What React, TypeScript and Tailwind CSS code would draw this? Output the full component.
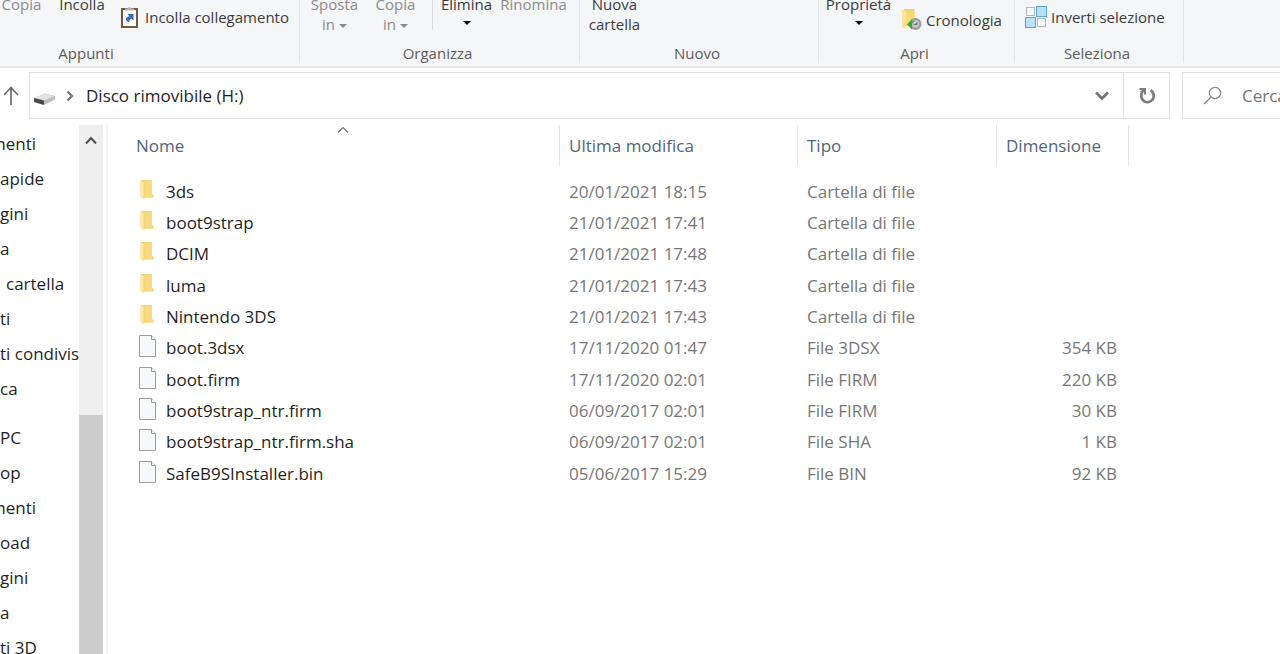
import type { ReactNode } from "react";

type Entry = { name: string; date: string; type: string; size: string };

const folder = "Cartella di file";

const entries: Entry[] = [
  { name: "3ds", date: "20/01/2021 18:15", type: folder, size: "" },
  { name: "boot9strap", date: "21/01/2021 17:41", type: folder, size: "" },
  { name: "DCIM", date: "21/01/2021 17:48", type: folder, size: "" },
  { name: "luma", date: "21/01/2021 17:43", type: folder, size: "" },
  { name: "Nintendo 3DS", date: "21/01/2021 17:43", type: folder, size: "" },
  { name: "boot.3dsx", date: "17/11/2020 01:47", type: "File 3DSX", size: "354 KB" },
  { name: "boot.firm", date: "17/11/2020 02:01", type: "File FIRM", size: "220 KB" },
  { name: "boot9strap_ntr.firm", date: "06/09/2017 02:01", type: "File FIRM", size: "30 KB" },
  { name: "boot9strap_ntr.firm.sha", date: "06/09/2017 02:01", type: "File SHA", size: "1 KB" },
  { name: "SafeB9SInstaller.bin", date: "05/06/2017 15:29", type: "File BIN", size: "92 KB" },
];

const quickAccess = ["menti", "apide", "gini", "a", "cartella", "ti", "ti condivis", "ca"];
const thisPc = ["PC", "op", "menti", "oad", "gini", "a", "ti 3D"];

function FolderIcon() {
  return (
    <svg width="16" height="22" viewBox="0 0 16 22" aria-hidden="true">
      <path d="M2 1h11v14l1.500 1v2.500H4z" fill="#f5d36f" />
      <path d="M5 2.500 13 1v14l1.500 1v2.500L5 18.500z" fill="#f8db80" />
      <path d="M1 1.500 5 3v17.500L3.500 20 1 17.500z" fill="#fbe8ac" />
      <path d="M5 3v16" stroke="#eecb69" strokeWidth=".7" />
    </svg>
  );
}

function FileIcon() {
  return (
    <svg width="18" height="22" viewBox="0 0 18 22" aria-hidden="true">
      <path d="M.5.500h12l4 4v17H.500z" fill="#f8f9fa" stroke="#9a9a9a" />
      <path d="M12.500.500v4h4" fill="#fff" stroke="#9a9a9a" />
    </svg>
  );
}

function PasteLinkIcon() {
  return (
    <svg width="17" height="22" viewBox="0 0 17 22" aria-hidden="true">
      <rect x="1" y="3" width="15" height="18" fill="#fdfdfd" stroke="#76583f" strokeWidth="2" />
      <path d="M4 4.500V2.500h2.500C6.500.700 10.500.700 10.500 2.500H13v2z" fill="#b4b7ba" />
      <path d="M6.500 8H12.500v6.500l-2-2c-1.500.7-2 1.700-2.200 3.500-2-.2-3.300-1.200-3.300-2.700 0-1.600 1.500-2.500 3.400-3z" fill="#2c6cb8" />
    </svg>
  );
}

function HistoryIcon() {
  return (
    <svg width="20" height="22" viewBox="0 0 20 22" aria-hidden="true">
      <path d="M2 0h10.500v17H4z" fill="#f3cf69" />
      <path d="M0 .500 4.500 2v18L0 18z" fill="#fbe49b" />
      <path d="M4.500 2h8v14h-8z" fill="#f8d978" />
      <circle cx="13.500" cy="15" r="6" fill="#9a9d9e" />
      <circle cx="13.500" cy="15" r="3.800" fill="#c3c7c7" />
      <path d="M11.500 15.500h4M15.500 13.500l-2 2" stroke="#777" strokeWidth="1.200" fill="none" />
      <path d="M5 15.500 10 10v2.500c1-.5 2-.5 2.500-.2-1.500 1-2.300 2-2.500 3.500v4.700z" fill="#35a936" />
    </svg>
  );
}

function InvertIcon() {
  return (
    <svg width="22" height="22" viewBox="0 0 22 22" aria-hidden="true">
      <rect x="1.500" y="1.500" width="8" height="8" fill="#fafafa" stroke="#b5b5b5" />
      <rect x="11.500" y=".5" width="10" height="10" fill="#b9e1fb" stroke="#57a5da" />
      <rect x=".5" y="11.500" width="10" height="10" fill="#b9e1fb" stroke="#57a5da" />
      <rect x="12.500" y="12.500" width="8" height="8" fill="#fafafa" stroke="#b5b5b5" />
    </svg>
  );
}

function Triangle() {
  return (
    <svg width="8" height="4" viewBox="0 0 8 4" className="inline-block" aria-hidden="true">
      <path d="M0 0h8L4 4z" fill="currentColor" />
    </svg>
  );
}

function Group({ label, className, labelClass = "pr-1", children }: { label: string; className: string; labelClass?: string; children: ReactNode }) {
  return (
    <section className={`h-[69px] shrink-0 border-r border-[#e3e6e8] ${className}`}>
      <div className="flex h-[49px] items-start">{children}</div>
      <h2 className={`text-center text-[#5c5c5c] ${labelClass}`}>{label}</h2>
    </section>
  );
}

function SideList({ items }: { items: string[] }) {
  return (
    <ul>
      {items.map((item, i) => (
        <li key={i}>
          <a href="#" className={`block h-[35px] leading-[35px] whitespace-nowrap ${item === "menti" ? "-ml-2.5" : item === "cartella" ? "ml-1.5" : ""}`}>
            {item}
          </a>
        </li>
      ))}
    </ul>
  );
}

function HeaderCell({ label, first = false }: { label: string; first?: boolean }) {
  return (
    <th scope="col" className="h-[51px] p-0 text-left align-top font-normal">
      <button className={`relative block h-[41px] w-full border-r border-[#e5e5e5] pt-px text-left text-[#52657c] ${first ? "pl-7" : "pl-[9px]"}`}>
        {label}
        {first && (
          <svg width="12" height="7" viewBox="0 0 12 7" className="absolute top-px left-[229px]" aria-hidden="true">
            <path d="M1 6.500 6 1.500l5 5" fill="none" stroke="#777" strokeWidth="1.200" />
          </svg>
        )}
      </button>
    </th>
  );
}

export default function App() {
  return (
    <div className="flex h-screen flex-col overflow-hidden bg-white font-['Open_Sans','Noto_Sans',sans-serif] text-[17px] text-[#1f1f1f]">
      <header className="h-[68px] shrink-0 overflow-hidden border-b-2 border-[#e4e7e8] bg-[#f4f6f8]">
        <div className="-mt-1.5 flex text-[15px] leading-5 whitespace-nowrap text-[#3b3b3b]">
          <Group label="Appunti" className="w-[300px]" labelClass="pr-[127px]">
            <button className="w-[43px] text-[#8b8b8b]">Copia</button>
            <button className="ml-2 w-[62px]">Incolla</button>
            <button className="mt-3 ml-2 flex items-center gap-[7px]">
              <PasteLinkIcon />
              Incolla collegamento
            </button>
          </Group>
          <Group label="Organizza" className="w-[280px]">
            <button className="ml-1 w-[61px] text-[#8b8b8b]">
              Sposta<br />in <Triangle />
            </button>
            <button className="w-[61px] text-[#8b8b8b]">
              Copia<br />in <Triangle />
            </button>
            <span className="ml-1.5 h-9 w-px bg-[#dcdfe1]" />
            <button className="w-[67px]">
              Elimina
              <span className="flex h-[18px] items-center justify-center text-black"><Triangle /></span>
            </button>
            <button className="w-[67px] text-[#8b8b8b]">Rinomina</button>
          </Group>
          <Group label="Nuovo" className="w-[239px]">
            <button className="ml-1 w-[61px]">
              Nuova<br />cartella
            </button>
          </Group>
          <Group label="Apri" className="w-[196px]">
            <button className="ml-1.5 w-[67px]">
              Proprietà
              <span className="flex h-[18px] items-center justify-center text-black"><Triangle /></span>
            </button>
            <button className="mt-[15px] ml-2.5 flex items-center gap-1">
              <HistoryIcon />
              Cronologia
            </button>
          </Group>
          <Group label="Seleziona" className="w-[169px]">
            <button className="mt-3 ml-2.5 flex items-center gap-1">
              <InvertIcon />
              Inverti selezione
            </button>
          </Group>
        </div>
      </header>

      <div className="flex shrink-0 items-stretch pt-1 pb-[6px]">
        <button aria-label="Su" className="flex w-[29px] items-center pl-0.5">
          <svg width="18" height="20" viewBox="0 0 18 20" aria-hidden="true">
            <path d="M9 19V2M2 9l7-7.500L16 9" fill="none" stroke="#6d6d6d" strokeWidth="1.700" />
          </svg>
        </button>
        <nav className="flex h-[47px] flex-1 items-center border border-[#e1e1e1] pl-1">
          <svg width="22" height="14" viewBox="0 0 22 14" className="mt-1.5" aria-hidden="true">
            <path d="M0 6 11 1.500 21 4v3.500L10 13 0 10z" fill="#bdbdbd" />
            <path d="M0 6 11 1.500 21 4 10 8.500z" fill="#e2e2e2" />
            <path d="M0 6l10 2.500V13L0 10z" fill="#4a4a4a" />
          </svg>
          <svg width="8" height="12" viewBox="0 0 8 12" className="ml-2.5" aria-hidden="true">
            <path d="m1.500 1.500 4.500 4.500-4.500 4.500" fill="none" stroke="#7a7a7a" strokeWidth="2.400" />
          </svg>
          <a href="#" className="ml-3 whitespace-nowrap">Disco rimovibile (H:)</a>
          <button aria-label="Posizioni precedenti" className="ml-auto flex h-full w-[43px] items-center justify-center">
            <svg width="14" height="10" viewBox="0 0 14 10" aria-hidden="true">
              <path d="m1 1.500 6 6 6-6" fill="none" stroke="#757575" strokeWidth="2.700" />
            </svg>
          </button>
          <button aria-label="Aggiorna" className="flex h-full w-[46px] items-center justify-center border-l border-[#e1e1e1]">
            <svg width="18" height="18" viewBox="0 0 18 18" aria-hidden="true">
              <path d="M12.500 3.300A6.300 6.300 0 1 1 4.500 5" fill="none" stroke="#7c7c7c" strokeWidth="2.800" />
              <path d="M1.500 1H8v6.500H6V5L3.500 6 2 4.500 4 3H1.500z" fill="#7c7c7c" />
            </svg>
          </button>
        </nav>
        <label className="ml-3 flex w-[98px] shrink-0 items-center overflow-hidden border-y border-l border-[#e1e1e1] pl-5">
          <svg width="19" height="19" viewBox="0 0 19 19" className="shrink-0" aria-hidden="true">
            <circle cx="12" cy="7" r="5.600" fill="none" stroke="#858585" strokeWidth="1.300" />
            <path d="m8 11-7 7" stroke="#858585" strokeWidth="1.300" />
          </svg>
          <input type="text" aria-label="Cerca" placeholder="Cerca" className="ml-5 w-14 shrink-0 outline-none placeholder:text-[#757575]" />
        </label>
      </div>

      <div className="flex min-h-0 flex-1">
        <nav className="w-[79px] shrink-0 overflow-hidden pt-px">
          <SideList items={quickAccess} />
          <div className="h-[14px]" />
          <SideList items={thisPc} />
        </nav>
        <div className="flex w-6 shrink-0 flex-col items-center bg-[#efefef]">
          <button aria-label="Scorri in su" className="flex h-[30px] shrink-0 items-center">
            <svg width="12" height="9" viewBox="0 0 12 9" aria-hidden="true">
              <path d="m1 7.500 5-5.500 5 5.500" fill="none" stroke="#505050" strokeWidth="2" />
            </svg>
          </button>
          <div className="mt-[260px] w-full flex-1 bg-[#cdcdcd]" />
        </div>
        <main className="ml-[3px] flex-1 border-l-2 border-[#f6f6f6]">
          <table className="w-[1021px] table-fixed border-collapse">
            <colgroup>
              <col className="w-[452px]" />
              <col className="w-[238px]" />
              <col className="w-[199px]" />
              <col className="w-[132px]" />
            </colgroup>
            <thead>
              <tr>
                <HeaderCell label="Nome" first />
                <HeaderCell label="Ultima modifica" />
                <HeaderCell label="Tipo" />
                <HeaderCell label="Dimensione" />
              </tr>
            </thead>
            <tbody className="whitespace-nowrap text-[#777]">
              {entries.map((e) => (
                <tr key={e.name} className="h-[31px] [&:nth-child(3n)]:h-8">
                  <td className="p-0 pl-[31px] text-[#1f1f1f]">
                    <span className="flex items-center">
                      <span className="-mt-1 w-[27px]">{e.type === folder ? <FolderIcon /> : <FileIcon />}</span>
                      {e.name}
                    </span>
                  </td>
                  <td className="p-0 pl-[9px]">{e.date}</td>
                  <td className="p-0 pl-[9px]">{e.type}</td>
                  <td className="p-0 pr-3 text-right">{e.size}</td>
                </tr>
              ))}
            </tbody>
          </table>
        </main>
      </div>
    </div>
  );
}
